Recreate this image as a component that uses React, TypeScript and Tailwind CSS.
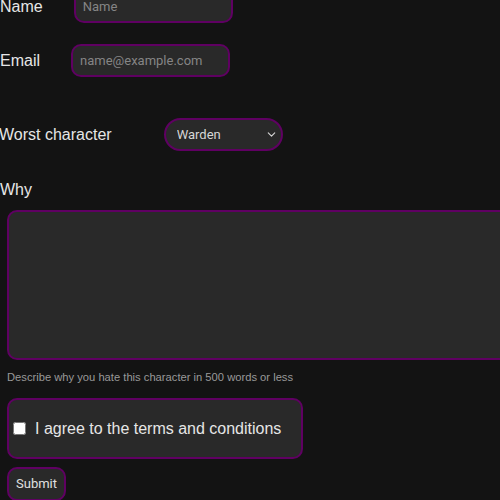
import React from 'react';
import { ChevronDown } from 'lucide-react';

const fieldClass =
  "h-[33px] w-[159px] rounded-[10px] border-2 border-[#5f0062] bg-[#292929] px-[7px] text-[13px] text-[#d6d6d6] placeholder:text-[#858585] font-['Roboto',sans-serif] outline-none";

const App: React.FC = () => {
  return (
    <div className="h-[500px] w-[500px] overflow-hidden bg-[#131313] font-['Liberation_Sans',Arial,sans-serif] text-[#e6e6e6]">
      <form className="-mt-[10px] flex flex-col">
        <div className="flex items-center">
          <label className="text-base">Name</label>
          <input className={`ml-[31px] ${fieldClass}`} placeholder="Name" />
        </div>

        <div className="mt-[21px] flex items-center">
          <label className="text-base">Email</label>
          <input className={`ml-[31px] ${fieldClass}`} placeholder="name@example.com" />
        </div>

        <div className="mt-[41px] flex items-center">
          <label className="-ml-px text-base">Worst character</label>
          <div className="relative ml-[52px]">
            <select className="h-[33px] w-[119px] appearance-none rounded-full border-2 border-[#5f0062] bg-[#292929] pl-[11px] text-[13px] text-[#d6d6d6] font-['Roboto',sans-serif] outline-none">
              <option>Warden</option>
            </select>
            <ChevronDown
              size={13}
              strokeWidth={2}
              className="pointer-events-none absolute right-[5px] top-[10px] text-[#d6d6d6]"
            />
          </div>
        </div>

        <label className="mt-[27px] h-6 text-base leading-6">Why</label>
        <textarea className="ml-[7px] mt-2 h-[150px] w-[520px] resize-none rounded-[10px] border-2 border-[#5f0062] bg-[#292929] outline-none" />

        <p className="ml-[7px] mt-[11px] text-[11.2px] leading-[13px] text-[#999999]">
          Describe why you hate this character in 500 words or less
        </p>

        <div className="ml-[7px] mt-[14px] flex h-[61px] w-[296px] items-center rounded-[10px] border-2 border-[#5f0062] bg-[#292929]">
          <input type="checkbox" className="ml-1 h-[13px] w-[13px]" />
          <span className="ml-[9px] text-base">I agree to the terms and conditions</span>
        </div>

        <button
          type="button"
          className="ml-[7px] mt-2 h-[34px] w-fit rounded-[10px] border-2 border-[#5f0062] bg-[#292929] px-[7px] text-[13px] text-[#e0e0e0] font-['Roboto',sans-serif]"
        >
          Submit
        </button>
      </form>
    </div>
  );
};

export default App;
